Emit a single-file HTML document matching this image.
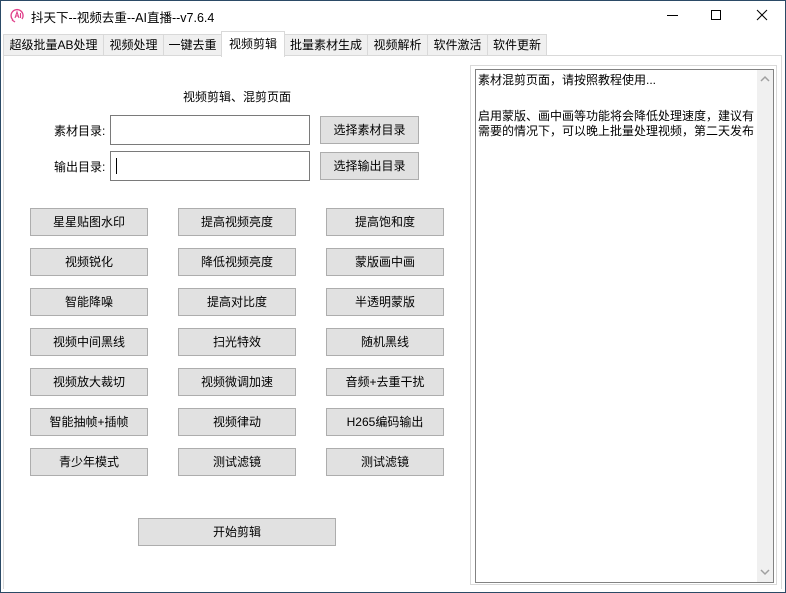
<!DOCTYPE html><html><head><meta charset="utf-8"><style>
*{margin:0;padding:0;box-sizing:border-box}
body{width:786px;height:593px;overflow:hidden;background:#fff;font-family:"Liberation Sans","Noto Sans CJK SC",sans-serif;font-size:12px;color:#000;position:relative}
.a{position:absolute}
.win{left:0;top:0;width:786px;height:593px;border:1px solid #2b4a66}
.tab{position:absolute;top:34px;height:22px;background:#f0f0f0;border:1px solid #d9d9d9;text-align:center;line-height:20px;font-size:12px}
.btn{position:absolute;width:118px;height:28px;background:#e1e1e1;border:1px solid #adadad;text-align:center;line-height:26px;font-size:12px}
.inp{position:absolute;left:110px;width:200px;height:30px;border:1px solid #7a7a7a;background:#fff}
.lbl{position:absolute;left:54px;font-size:12px}
.t{position:absolute;left:478px;line-height:16px;white-space:nowrap}
</style></head><body>
<div class="a win"></div>
<svg class="a" style="left:9px;top:7px" width="16" height="16" viewBox="0 0 16 16"><path d="M4 13 A6 6 0 1 1 13 12" fill="none" stroke="#e0408a" stroke-width="1.3"/><path d="M3 13 L6 15" stroke="#e0408a" stroke-width="1.3"/><path d="M6 11 L8 5 L10 11 M7 9 H9 M11.5 6 V11" fill="none" stroke="#e0408a" stroke-width="1.1"/></svg>
<div class="a" style="left:31px;top:7px;font-size:12.5px">抖天下--视频去重--AI直播--v7.6.4</div>
<div class="a" style="left:667px;top:15px;width:11px;height:1px;background:#000"></div>
<div class="a" style="left:711px;top:10px;width:10px;height:10px;border:1px solid #000"></div>
<svg class="a" style="left:756px;top:9px" width="12" height="12"><path d="M1 1L11 11M11 1L1 11" stroke="#000" stroke-width="1"/></svg>
<div class="tab" style="left:3px;width:101px">超级批量AB处理</div>
<div class="tab" style="left:103px;width:61px">视频处理</div>
<div class="tab" style="left:163px;width:59px">一键去重</div>
<div class="tab" style="left:284px;width:84px">批量素材生成</div>
<div class="tab" style="left:367px;width:61px">视频解析</div>
<div class="tab" style="left:427px;width:61px">软件激活</div>
<div class="tab" style="left:487px;width:60px">软件更新</div>
<div class="a" style="left:3px;top:55px;width:779px;height:534px;border:1px solid #d9d9d9;border-bottom:none"></div>
<div class="tab" style="left:221px;top:31px;width:64px;height:26px;background:#fff;border-bottom:none;line-height:24px">视频剪辑</div>
<div class="a" style="left:183px;top:88px">视频剪辑、混剪页面</div>
<div class="lbl" style="top:122px">素材目录:</div>
<div class="lbl" style="top:158px">输出目录:</div>
<div class="inp" style="top:115px"></div>
<div class="inp" style="top:151px"><div class="a" style="left:5px;top:6px;width:1px;height:16px;background:#000"></div></div>
<div class="btn" style="left:320px;top:116px;width:99px">选择素材目录</div>
<div class="btn" style="left:320px;top:152px;width:99px">选择输出目录</div>
<div class="btn" style="left:30px;top:208px">星星贴图水印</div>
<div class="btn" style="left:178px;top:208px">提高视频亮度</div>
<div class="btn" style="left:326px;top:208px">提高饱和度</div>
<div class="btn" style="left:30px;top:248px">视频锐化</div>
<div class="btn" style="left:178px;top:248px">降低视频亮度</div>
<div class="btn" style="left:326px;top:248px">蒙版画中画</div>
<div class="btn" style="left:30px;top:288px">智能降噪</div>
<div class="btn" style="left:178px;top:288px">提高对比度</div>
<div class="btn" style="left:326px;top:288px">半透明蒙版</div>
<div class="btn" style="left:30px;top:328px">视频中间黑线</div>
<div class="btn" style="left:178px;top:328px">扫光特效</div>
<div class="btn" style="left:326px;top:328px">随机黑线</div>
<div class="btn" style="left:30px;top:368px">视频放大裁切</div>
<div class="btn" style="left:178px;top:368px">视频微调加速</div>
<div class="btn" style="left:326px;top:368px">音频+去重干扰</div>
<div class="btn" style="left:30px;top:408px">智能抽帧+插帧</div>
<div class="btn" style="left:178px;top:408px">视频律动</div>
<div class="btn" style="left:326px;top:408px">H265编码输出</div>
<div class="btn" style="left:30px;top:448px">青少年模式</div>
<div class="btn" style="left:178px;top:448px">测试滤镜</div>
<div class="btn" style="left:326px;top:448px">测试滤镜</div>
<div class="btn" style="left:138px;top:518px;width:198px">开始剪辑</div>
<div class="a" style="left:470px;top:65px;width:307px;height:520px;border:1px solid #d9d9d9"></div>
<div class="a" style="left:475px;top:69px;width:299px;height:514px;border:1px solid #828282;background:#fff"></div>
<div class="a" style="left:757px;top:70px;width:16px;height:512px;background:#f0f0f0"></div>
<svg class="a" style="left:760px;top:75px" width="10" height="8"><path d="M1 6L5 2L9 6" fill="none" stroke="#a0a0a0" stroke-width="1.5"/></svg>
<svg class="a" style="left:760px;top:568px" width="10" height="8"><path d="M1 2L5 6L9 2" fill="none" stroke="#a0a0a0" stroke-width="1.5"/></svg>
<div class="t" style="top:72px">素材混剪页面，请按照教程使用...</div>
<div class="t" style="top:108px">启用蒙版、画中画等功能将会降低处理速度，建议有</div>
<div class="t" style="top:123px">需要的情况下，可以晚上批量处理视频，第二天发布</div>
</body></html>
